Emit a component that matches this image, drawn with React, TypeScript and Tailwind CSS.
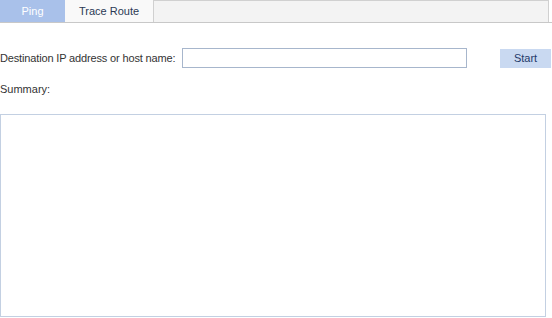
export default function App() {
  return (
    <div className="w-[552px] h-[318px] bg-white overflow-hidden font-['Liberation_Sans',Arial,sans-serif] text-[11px] text-[#333]">
      {/* Tabs */}
      <div className="flex h-[23px] border-b border-[#c8c8c8]">
        <div className="w-[65px] flex items-center justify-center bg-[#a9c1ea] text-white">
          Ping
        </div>
        <div className="w-[89px] flex items-center justify-center bg-[#f9f9f9] border-r border-[#d0d0d0] text-[#2b3a55]">
          Trace Route
        </div>
        <div className="w-[395px] border-t border-[#d0d0d0] bg-[#f3f3f3] border-r" />
      </div>

      <div className="flex items-center mt-[25px] h-[20px]">
        <span className="w-[182px] shrink-0 whitespace-nowrap tracking-[-0.15px]">Destination IP address or host name:</span>
        <input
          type="text"
          className="w-[285px] shrink-0 h-[20px] border border-[#a7b6cc] outline-none"
        />
        <button className="ml-[33px] shrink-0 w-[51px] h-[19px] bg-[#c9d9f1] text-[#1f3b6b] text-[11px]">
          Start
        </button>
      </div>

      <div className="mt-[14px] leading-[14px]">Summary:</div>

      <textarea className="mt-[18px] block w-[546px] h-[203px] border border-[#c3d0e2] resize-none outline-none" />
    </div>
  );
}
